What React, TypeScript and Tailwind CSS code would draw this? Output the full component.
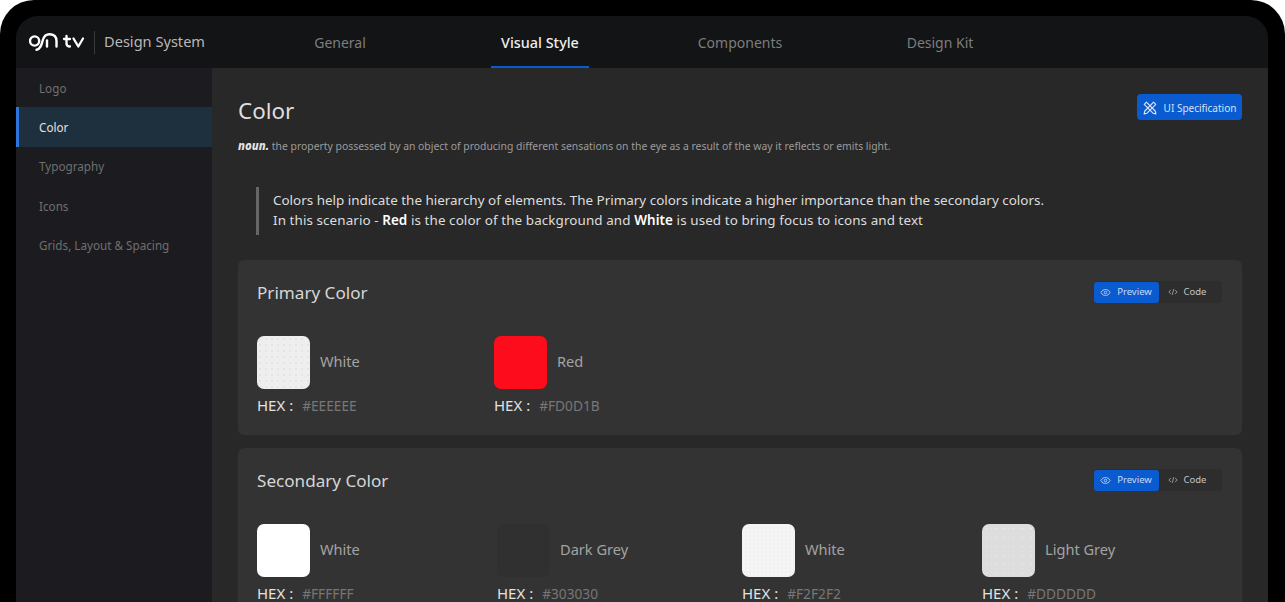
import React from "react";

function Logo() {
  return (
    <svg width="56" height="22" viewBox="0 0 56 22" fill="none" className="shrink-0">
      <circle cx="5.6" cy="10" r="4.6" stroke="#fff" strokeWidth="2.4" />
      <path d="M7.5 18.8 C12 18 12.7 13 14 8.5 C15.3 4.5 18 3 21 3.2 C25.5 3.5 27.5 6.5 27.5 10 V15.5" stroke="#fff" strokeWidth="2.4" strokeLinecap="round" />
      <path d="M18 15.5 V9.5" stroke="#fff" strokeWidth="2.4" strokeLinecap="round" />
      <path d="M37.5 5 V12.5 C37.5 14.8 38.5 15.5 41 15.5 M35 8 H41" stroke="#fff" strokeWidth="2.3" strokeLinecap="round" />
      <path d="M44.5 7.5 L49.3 15.5 L54 7.5" stroke="#fff" strokeWidth="2.3" strokeLinecap="round" strokeLinejoin="round" />
    </svg>
  );
}

function SpecIcon() {
  return (
    <svg width="14" height="14" viewBox="0 0 14 14" fill="none" stroke="#dbe6f7" strokeWidth="1.1" strokeLinejoin="round">
      <path d="M1.2 3.4 L3.4 1.2 L12.2 10 L12.9 12.9 L10 12.2 Z" />
      <path d="M12.8 3.4 L10.6 1.2 L1.8 10 L1.1 12.9 L4 12.2 Z" />
    </svg>
  );
}

function EyeIcon() {
  return (
    <svg width="11" height="11" viewBox="0 0 12 12" fill="none" stroke="#b9d0f2" strokeWidth="1">
      <path d="M1 6 C2.5 3.4 4 2.8 6 2.8 C8 2.8 9.5 3.4 11 6 C9.5 8.6 8 9.2 6 9.2 C4 9.2 2.5 8.6 1 6 Z" />
      <circle cx="6" cy="6" r="1.4" />
    </svg>
  );
}

function CodeIcon() {
  return (
    <svg width="10" height="10" viewBox="0 0 12 12" fill="none" stroke="#a8a8a8" strokeWidth="1">
      <path d="M3.5 3.5 L1 6 L3.5 8.5 M8.5 3.5 L11 6 L8.5 8.5 M7 2.5 L5 9.5" />
    </svg>
  );
}

function Toggle() {
  return (
    <div className="flex h-[22px] w-[128px] shrink-0 items-center rounded-[4px] bg-[#2d2d2d] text-[9.5px]">
      <div className="flex h-[21px] w-[65px] items-center justify-center gap-[6px] rounded-[3px] bg-[#0a5ad0] pr-[1px] text-[#c9dcf7]">
        <EyeIcon />
        <span>Preview</span>
      </div>
      <div className="flex flex-1 items-center justify-center gap-[6px] pr-[7px] text-[#c4c4c4]">
        <CodeIcon />
        <span>Code</span>
      </div>
    </div>
  );
}

function Swatch({ color, name, hex, width, dot, dotSize = "6px 6px" }: { color: string; name: string; hex: string; width: string; dot?: string; dotSize?: string }) {
  return (
    <div className={width}>
      <div className="flex items-center gap-[10px]">
        <div
          className="h-[53px] w-[53px] rounded-[7px]"
          style={{
            backgroundColor: color,
            backgroundImage: dot ? `radial-gradient(${dot} 0.6px, transparent 0.8px)` : undefined,
            backgroundSize: dot ? dotSize : undefined,
          }}
        />
        <span className="pb-[2px] text-[14.6px] text-[#a3a3a3]">{name}</span>
      </div>
      <div className="mt-[5px] flex items-baseline gap-[9px] text-[15px] leading-[22px]">
        <span className="text-[#e2e2e2]">HEX :</span>
        <span className="text-[13.7px] text-[#777777]">{hex}</span>
      </div>
    </div>
  );
}

function Card({ title, children, height }: { title: string; children: React.ReactNode; height: string }) {
  return (
    <section className={`shrink-0 rounded-[6px] bg-[#333333] pl-[19px] pr-[20px] ${height}`}>
      <div className="flex items-start justify-between pt-[21px]">
        <h2 className="text-[17.1px] leading-[23px] text-[#d6d6d6]">{title}</h2>
        <Toggle />
      </div>
      <div className="mt-[32px] flex">{children}</div>
    </section>
  );
}

export default function App() {
  const nav = ["General", "Visual Style", "Components", "Design Kit"];
  const side = ["Logo", "Color", "Typography", "Icons", "Grids, Layout & Spacing"];
  return (
    <div className="h-[602px] w-[1285px] overflow-hidden bg-white font-['Noto_Sans',sans-serif]">
      <div className="h-[602px] rounded-t-[34px] bg-black pl-[16px] pr-[17px] pt-[16px]">
        <div className="flex h-full flex-col overflow-hidden rounded-t-[22px]">
          <header className="flex h-[52px] shrink-0 items-center bg-[#131416]">
            <div className="flex w-[275px] items-center pl-[13px]">
              <Logo />
              <div className="ml-[9px] h-[23px] w-px bg-[#3a3a3a]" />
              <span className="ml-[9px] text-[14.6px] text-[#b8b8b8]">Design System</span>
            </div>
            <nav className="flex gap-[102px]">
              {nav.map((n, i) => {
                const active = i === 1;
                return (
                  <div
                    key={n}
                    className={`flex h-[52px] w-[98px] items-center justify-center whitespace-nowrap ${active ? "border-b-[2px] border-[#0a5ad0] pt-[3px] text-[14.4px] font-medium text-[#eeeeee]" : "text-[14px] text-[#7d7d7d]"}`}
                  >
                    {n}
                  </div>
                );
              })}
            </nav>
          </header>
          <div className="flex min-h-0 flex-1">
            <aside className="w-[196px] shrink-0 bg-[#1c1c20] text-[11.7px]">
              {side.map((s) => (
                <div
                  key={s}
                  className={`flex h-[39.25px] items-center pt-[2px] ${s === "Color" ? "border-l-[3px] border-[#2f74dd] bg-[#1e2f3e] pl-[20px] text-[#e2e2e2]" : "pl-[23px] text-[#6f6f6f]"}`}
                >
                  {s}
                </div>
              ))}
            </aside>
            <main className="min-w-0 flex-1 bg-[#282828] px-[26px]">
              <div className="flex items-start justify-between pt-[26px]">
                <h1 className="text-[22.4px] leading-[34px] text-[#dedede]">Color</h1>
                <button className="flex h-[26px] w-[105px] items-center justify-center gap-[7px] rounded-[4px] bg-[#0a5ad0] pt-[2px] text-[10px] text-[#d5e3f8]">
                  <SpecIcon />
                  <span>UI Specification</span>
                </button>
              </div>
              <p className="mt-[10px] text-[10.4px] leading-[16px] text-[#9c9c9c]">
                <b className="text-[11.4px] font-extrabold italic text-[#e4e4e4]">noun.</b> the property possessed by an object of producing different sensations on the eye as a result of the way it reflects or emits light.
              </p>
              <blockquote className="ml-[18px] mt-[33px] border-l-[3px] border-[#666666] pb-[5px] pl-[14px] pt-[3px] text-[13.45px] leading-[20px] text-[#dddddd]">
                <div>Colors help indicate the hierarchy of elements. The Primary colors indicate a higher importance than the secondary colors.</div>
                <div className="tracking-[0.08px]">
                  In this scenario - <b className="font-semibold text-white">Red</b> is the color of the background and <b className="font-semibold text-white">White</b> is used to bring focus to icons and text
                </div>
              </blockquote>
              <div className="mt-[25px] flex flex-col gap-[13px]">
                <Card title="Primary Color" height="h-[175px]">
                  <Swatch width="w-[237px]" color="#eeeeee" name="White" hex="#EEEEEE" dot="rgba(0,0,0,0.09)" />
                  <Swatch width="w-[240px]" color="#fd0d1b" name="Red" hex="#FD0D1B" />
                </Card>
                <Card title="Secondary Color" height="h-[175px]">
                  <Swatch width="w-[240px]" color="#ffffff" name="White" hex="#FFFFFF" />
                  <Swatch width="w-[245px]" color="#303030" name="Dark Grey" hex="#303030" />
                  <Swatch width="w-[240px]" color="#f2f2f2" name="White" hex="#F2F2F2" dot="rgba(255,255,255,0.9)" dotSize="4px 4px" />
                  <Swatch width="w-[240px]" color="#dddddd" name="Light Grey" hex="#DDDDDD" dot="rgba(255,255,255,0.6)" dotSize="9px 9px" />
                </Card>
              </div>
            </main>
          </div>
        </div>
      </div>
    </div>
  );
}
